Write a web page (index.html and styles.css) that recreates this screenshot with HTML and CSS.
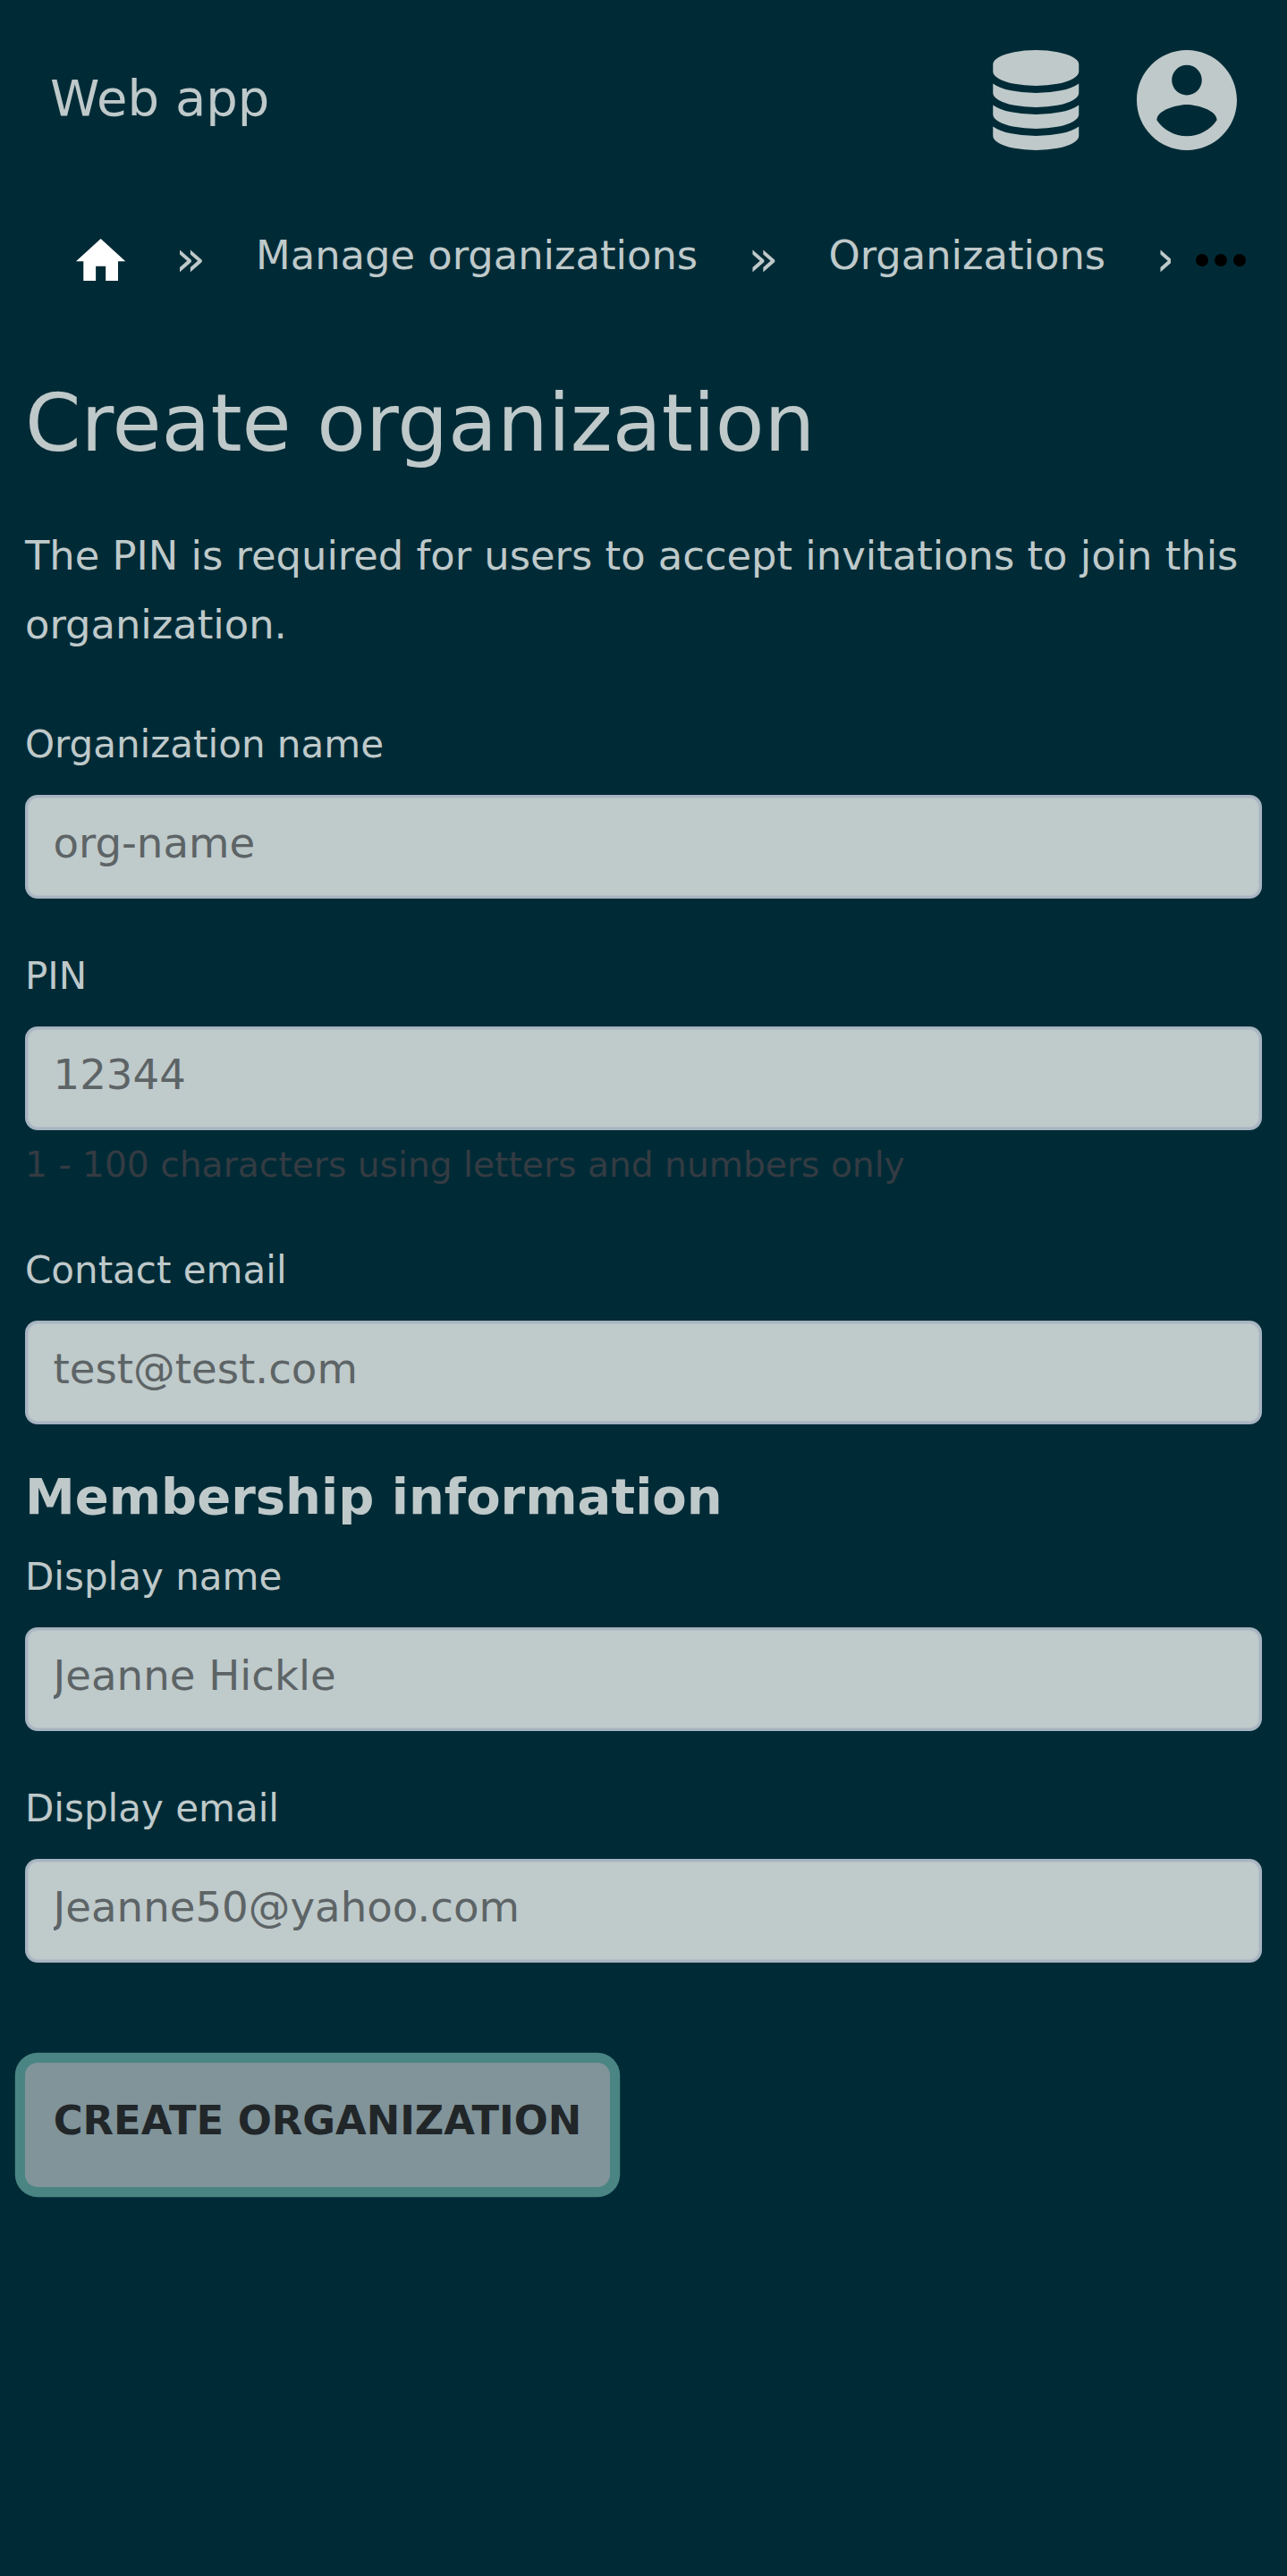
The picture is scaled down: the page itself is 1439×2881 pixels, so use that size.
FILE: index.html
```
<!DOCTYPE html>
<html lang="en">
<head>
<meta charset="utf-8">
<title>Create organization</title>
<link rel="stylesheet" href="styles.css">
</head>
<body>
<header class="topbar">
  <span class="brand">Web app</span>
  <div class="actions">
    <svg class="icon-db" viewBox="0 0 1536 1792"><path d="M768 768q237 0 443-43t325-127v170q0 69-103 128t-280 93.500-385 34.500-385-34.500-280-93.500-103-128v-170q119 84 325 127t443 43zm0 768q237 0 443-43t325-127v170q0 69-103 128t-280 93.500-385 34.500-385-34.500-280-93.500-103-128v-170q119 84 325 127t443 43zm0-384q237 0 443-43t325-127v170q0 69-103 128t-280 93.500-385 34.500-385-34.500-280-93.500-103-128v-170q119 84 325 127t443 43zm0-1152q208 0 385 34.500t280 93.500 103 128v128q0 69-103 128t-280 93.500-385 34.500-385-34.500-280-93.500-103-128v-128q0-69 103-128t280-93.500 385-34.500z"/></svg>
    <svg class="icon-user" viewBox="2 2 20 20"><path d="M12 2C6.480 2 2 6.480 2 12s4.480 10 10 10 10-4.480 10-10S17.520 2 12 2zm0 3c1.660 0 3 1.340 3 3s-1.340 3-3 3-3-1.340-3-3 1.340-3 3-3zm0 14.200c-2.500 0-4.710-1.280-6-3.220.030-1.990 4-3.080 6-3.080 1.990 0 5.970 1.090 6 3.080-1.290 1.940-3.500 3.220-6 3.220z"/></svg>
  </div>
</header>
<nav class="crumbs">
  <div class="trail">
    <svg class="icon-home" viewBox="2 3 20 17" preserveAspectRatio="none"><path d="M10 20v-6h4v6h5v-8h3L12 3 2 12h3v8z"/></svg>
    <span class="sep">»</span>
    <a class="crumb">Manage organizations</a>
    <span class="sep">»</span>
    <a class="crumb">Organizations</a>
    <span class="sep">»</span>
  </div>
  <svg class="icon-more" viewBox="0 0 24 24"><circle cx="6" cy="12" r="2"/><circle cx="12" cy="12" r="2"/><circle cx="18" cy="12" r="2"/></svg>
</nav>
<main class="page">
  <h1 class="title">Create organization</h1>
  <p class="intro">The PIN is required for users to accept invitations to join this organization.</p>
  <form class="form">
    <div class="field">
      <label class="label" for="org">Organization name</label>
      <input class="input" id="org" type="text" placeholder="org-name">
    </div>
    <div class="field field-pin">
      <label class="label" for="pin">PIN</label>
      <input class="input" id="pin" type="text" placeholder="12344">
      <small class="hint">1 - 100 characters using letters and numbers only</small>
    </div>
    <div class="field field-contact">
      <label class="label" for="contact">Contact email</label>
      <input class="input" id="contact" type="text" placeholder="test@test.com">
    </div>
    <h2 class="subtitle">Membership information</h2>
    <div class="field">
      <label class="label" for="name">Display name</label>
      <input class="input" id="name" type="text" placeholder="Jeanne Hickle">
    </div>
    <div class="field">
      <label class="label" for="email">Display email</label>
      <input class="input" id="email" type="text" placeholder="Jeanne50@yahoo.com">
    </div>
    <button class="submit" type="button">CREATE ORGANIZATION</button>
  </form>
</main>
</body>
</html>
```
FILE: styles.css
```
* { box-sizing: border-box; }
body {
  margin: 0;
  min-height: 2881px;
  background: #002b36;
  color: #bfc9ca;
  font-family: "DejaVu Sans", sans-serif;
  font-size: 44.8px;
}
svg { display: block; flex: none; fill: #bfc9ca; }

.topbar {
  display: flex;
  align-items: center;
  justify-content: space-between;
  height: 224px;
  padding: 0 56.500px 0 56px;
}
.brand { font-size: 56px; line-height: 65px; padding-bottom: 5px; }
.actions { display: flex; gap: 64px; }
.icon-db { width: 96.500px; height: 112px; }
.icon-user { width: 112px; height: 112px; }

.crumbs { display: flex; align-items: center; height: 133px; }
.trail {
  display: flex;
  align-items: center;
  gap: 56px;
  width: 1309px;
  height: 133px;
  padding-left: 84.500px;
  overflow: hidden;
  white-space: nowrap;
}
.icon-home { width: 55.300px; height: 47.600px; fill: #fff; }
.sep { flex: none; font-size: 56px; line-height: 65px; padding-bottom: 5px; }
.crumb { flex: none; line-height: 53px; padding-bottom: 10px; }
.icon-more { width: 84px; height: 84px; margin-left: 14px; fill: #000; }

.page { padding: 60px 28px 0; }
.title { margin: 0 0 54px; font-size: 89.600px; font-weight: 400; line-height: 112px; }
.intro { margin: 0 0 67px; line-height: 77px; }

.form { display: flex; flex-direction: column; align-items: flex-start; }
.field { display: flex; flex-direction: column; width: 100%; margin-bottom: 58.500px; }
.field-pin { margin-bottom: 65px; }
.field-contact { margin-bottom: 48.500px; }
.label { margin-bottom: 28px; font-size: 42px; line-height: 57px; }
.input {
  width: 100%;
  height: 115.500px;
  padding: 0 28px 7px 28.500px;
  border: 3px solid #a7b4c1;
  border-radius: 14px;
  background: #bfcacb;
  box-shadow: inset 0 0 0 1px #b5c0c8;
  color: #5d6466;
  font: 46.670px "DejaVu Sans", sans-serif;
}
.input::placeholder { color: #5d6466; opacity: 1; }
.hint { margin-top: 14.500px; color: #343b42; font-size: 39.200px; line-height: 49px; }
.subtitle { margin: 0 0 29px; font-size: 56px; font-weight: 700; line-height: 65px; }
.submit {
  width: 654px;
  height: 139.500px;
  margin-top: 53.500px;
  padding: 0 0 9px;
  border: 0;
  border-radius: 14px;
  background: #80949a;
  box-shadow: 0 0 0 11.200px #4a8583;
  color: #212629;
  font: 700 44.800px "DejaVu Sans", sans-serif;
  white-space: nowrap;
}
```
